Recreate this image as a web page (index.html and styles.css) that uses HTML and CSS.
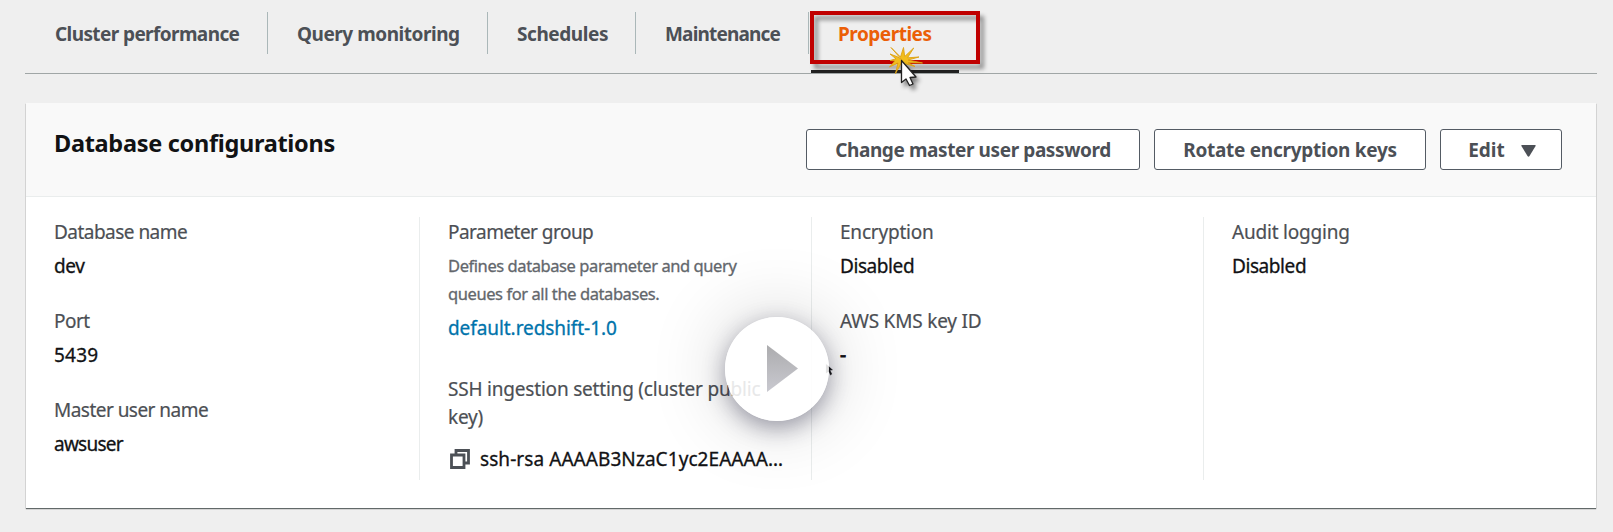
FILE: index.html
```
<!DOCTYPE html>
<html lang="en">
<head>
<meta charset="utf-8">
<title>Cluster properties</title>
<link rel="stylesheet" href="styles.css">
</head>
<body>
<nav class="tabs">
  <a class="tab tab-performance">Cluster performance</a>
  <a class="tab tab-query">Query monitoring</a>
  <a class="tab tab-schedules">Schedules</a>
  <a class="tab tab-maintenance">Maintenance</a>
  <a class="tab tab-properties">Properties</a>
</nav>
<main class="card">
  <header class="card-header">
    <h2 class="title">Database configurations</h2>
    <div class="actions">
      <button class="btn btn-password">Change master user password</button>
      <button class="btn btn-rotate">Rotate encryption keys</button>
      <button class="btn btn-edit">Edit<svg class="caret" viewBox="0 0 15 12"><path d="M1 0h13q1 0 .6 1L8.500 11q-1 1.500-2 0L.4 1Q0 0 1 0z"/></svg></button>
    </div>
  </header>
  <section class="columns">
    <div class="col">
      <dl class="field"><dt>Database name</dt><dd>dev</dd></dl>
      <dl class="field"><dt>Port</dt><dd class="number">5439</dd></dl>
      <dl class="field"><dt>Master user name</dt><dd class="user">awsuser</dd></dl>
    </div>
    <div class="col">
      <dl class="field field-group">
        <dt>Parameter group</dt>
        <dd class="hint">Defines database parameter and query<br>queues for all the databases.</dd>
        <dd><a class="link">default.redshift-1.0</a></dd>
      </dl>
      <dl class="field">
        <dt class="loose wrapped">SSH ingestion setting (cluster public<br>key)</dt>
        <dd class="key-row"><svg class="copy" viewBox="0 0 20 20"><path d="M6 6V1.500h12.500V14H14M1.500 6H14v12.500H1.500z"/></svg><span>ssh-rsa AAAAB3NzaC1yc2EAAAA…</span></dd>
      </dl>
    </div>
    <div class="col">
      <dl class="field"><dt class="loose">Encryption</dt><dd>Disabled</dd></dl>
      <dl class="field"><dt class="loose">AWS KMS key ID</dt><dd class="dash">-</dd></dl>
    </div>
    <div class="col">
      <dl class="field"><dt class="loose">Audit logging</dt><dd>Disabled</dd></dl>
    </div>
  </section>
</main>
<div class="highlight"></div>
<svg class="pointer" viewBox="0 0 60 60">
  <path class="burst" d="M22 20L11 7.500 20.500 17l3-9.500 1.200 9 9-8.500-6.200 9.800 11.500-.8-11 3 14.500 3-14.500-.3 7 3.800-9-2.500-1.500 2-3.500-2.500-5.500 10 2.500-10.500-8.500 4 5.500-6-5-.5 6-1.700-6-4.800 7.500 2.800z"/>
  <path class="arrow" d="M21.500 20.500v22l4.500-3.500 3.500 6.500 3.500-1.500-3-6.500 6-.5z"/>
</svg>
<svg class="mini-pointer" viewBox="0 0 10 14"><path d="M1 0l8 7-3 .5 2 4-2 1.500-2-4-3 2z"/></svg>
<div class="play">
  <svg class="play-icon" viewBox="0 0 32 47">
    <defs><linearGradient id="tone" x2="0" y2="1"><stop offset="0" stop-color="#acacae"/><stop offset="1" stop-color="#c9c9d0"/></linearGradient></defs>
    <path d="M0 0l31 23.500L0 47z" fill="url(#tone)"/>
  </svg>
</div>
</body>
</html>
```
FILE: styles.css
```
* { box-sizing: border-box; }
body { margin: 0; height: 532px; overflow: hidden; background: #efefef; color: #111214; font: 19px/28px "Noto Sans", sans-serif; }

.tabs { display: flex; margin: 0 16px 0 25px; height: 74px; padding-top: 12px; border-bottom: 1px solid #a0a6a6; }
.tab { flex: none; height: 42px; padding: 8px 0 0 30px; font-weight: 700; color: #4c5056; border-right: 1px solid #aab7b8; white-space: nowrap; }
.tab-performance { width: 243px; letter-spacing: -.6px; }
.tab-query { width: 220px; padding-left: 29px; letter-spacing: -.47px; }
.tab-schedules { width: 148px; padding-left: 29px; letter-spacing: -.43px; }
.tab-maintenance { width: 173px; padding-left: 29px; letter-spacing: -.83px; }
.tab-properties { width: 148px; height: 61px; margin-left: 2px; padding-left: 27px; color: #eb5f07; letter-spacing: -.5px; border: 0; border-bottom: 3px solid #222; }

.card { margin: 29px 17px 0 26px; height: 405px; background: #fff; box-shadow: 0 1px 1px rgba(0, 10, 10, .45), 0 1px 1px rgba(0, 10, 10, .25); }
.card-header { display: flex; justify-content: space-between; height: 94px; padding: 26px 34px 0 28px; background: #f9f9f9; border-bottom: 1px solid #eaeded; }
.title { margin: -3px 0 0; font-size: 23.5px; line-height: 34px; letter-spacing: -.3px; }
.actions { display: flex; gap: 14px; }
.btn { height: 41px; padding: 1px 0 0; border: 1px solid #545b64; border-radius: 3px; background: #fff; color: #4c5056; font: 700 19px/28px "Noto Sans", sans-serif; white-space: nowrap; }
.btn-password { width: 334px; letter-spacing: -.4px; }
.btn-rotate { width: 272px; letter-spacing: -.27px; }
.btn-edit { width: 122px; padding-left: 2px; }
.caret { width: 15px; height: 12px; margin-left: 16px; fill: #4c5056; }

.columns { display: grid; grid-template-columns: 394px 392px 392px 1fr; grid-template-rows: 100%; height: 263px; margin-top: 20px; }
.col { padding: 1px 0 0 28px; border-right: 1px solid #eaeded; white-space: nowrap; }
.col:last-child { border: 0; }
.field { margin: 0 0 27px; }
.field-group { margin-bottom: 34px; }
dt { color: #4c4f54; letter-spacing: -.53px; -webkit-text-stroke: .2px currentColor; }
dt.loose { letter-spacing: -.2px; }
dt.wrapped { line-height: 27.5px; }
dd { margin: 6px 0 0; letter-spacing: -.42px; -webkit-text-stroke: .3px currentColor; }
dd.number { letter-spacing: .2px; }
dd.user { letter-spacing: -.75px; }
dd.hint { font-size: 16.5px; color: #63676c; letter-spacing: -.42px; }
dd.dash { -webkit-text-stroke-width: .8px; }
.link { color: #0073ab; letter-spacing: -.07px; }
.key-row { display: flex; align-items: center; gap: 10px; margin-top: 14px; padding-left: 2px; letter-spacing: .07px; }
.copy { width: 20px; height: 20px; fill: none; stroke: #4c5056; stroke-width: 2.8; }

/* Annotations drawn over the page */
.highlight { position: absolute; left: 810px; top: 11px; width: 170px; height: 53px; border: 4px solid #c00000; filter: drop-shadow(4px 5px 2px rgba(0, 0, 0, .4)); }
.pointer { position: absolute; left: 880px; top: 40px; width: 60px; height: 60px; }
.burst { fill: #f2bd1d; stroke: #dda216; stroke-width: .9; }
.arrow { fill: #fff; stroke: #222; stroke-width: 1.3; stroke-linejoin: round; filter: drop-shadow(3px 4px 2px rgba(0, 0, 0, .45)); }
.mini-pointer { position: absolute; left: 825px; top: 363px; width: 9px; height: 14px; fill: #111; stroke: #fff; stroke-width: .3; }
.play { position: absolute; left: 725px; top: 317px; width: 104px; height: 104px; border-radius: 50%; background: rgba(255, 255, 255, .87); box-shadow: 0 7px 22px rgba(40, 40, 70, .42), 0 0 80px rgba(0, 0, 0, .2); }
.play-icon { display: block; width: 32px; height: 47px; margin: 28px 0 0 42px; }
```
